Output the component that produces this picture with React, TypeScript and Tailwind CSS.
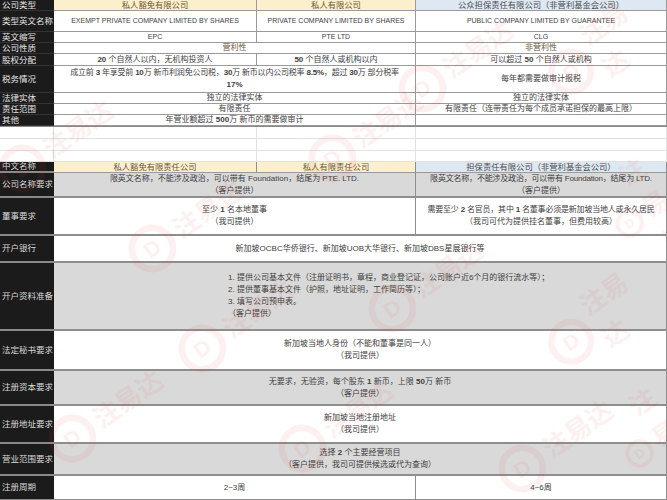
import type { ReactNode } from "react";

const FONT = "font-['Liberation_Sans','Noto_Sans_CJK_SC',sans-serif]";

function Label({ children, lower = false }: { children: ReactNode; lower?: boolean }) {
  return (
    <div
      className={
        lower
          ? "flex items-center bg-[#1b1b1b] border-b-2 border-[#8a8a8a] pl-[2px] text-[8.5px] text-[#d8d8d8] whitespace-nowrap overflow-hidden"
          : "flex items-center bg-[#1b1b1b] border-b border-[#333] pl-[2px] text-[8.5px] leading-[10px] text-[#e4e4e4] whitespace-nowrap overflow-hidden"
      }
    >
      {children}
    </div>
  );
}

function Cell({ children, className = "" }: { children?: ReactNode; className?: string }) {
  return (
    <div
      className={
        "flex flex-col items-center justify-center text-center leading-[10px] whitespace-nowrap border-r border-b border-[#9a9a9a] overflow-hidden " +
        className
      }
    >
      {children}
    </div>
  );
}

function LowCell({ children, className = "" }: { children?: ReactNode; className?: string }) {
  return (
    <div
      className={
        "flex flex-col items-center justify-center text-center leading-[12px] whitespace-nowrap border-r border-[#8e8e8e] overflow-hidden " +
        className
      }
    >
      {children}
    </div>
  );
}

const B = ({ children }: { children: ReactNode }) => <span className="font-bold">{children}</span>;

const marks = [
  { x: -10, y: 120 },
  { x: 120, y: 200 },
  { x: 300, y: 110 },
  { x: 390, y: 40 },
  { x: 540, y: 10 },
  { x: 610, y: 150 },
  { x: 170, y: 300 },
  { x: 360, y: 260 },
  { x: 540, y: 280 },
  { x: 40, y: 390 },
  { x: 270, y: 400 },
  { x: 490, y: 420 },
  { x: 620, y: 380 },
];

function Watermark({ x, y }: { x: number; y: number }) {
  return (
    <div
      className="absolute flex items-center gap-1 -rotate-[35deg] text-[#e04a3a] opacity-[0.07]"
      style={{ left: x, top: y }}
    >
      <svg width="50" height="50" viewBox="0 0 46 46">
        <circle cx="23" cy="23" r="19" fill="none" stroke="currentColor" strokeWidth="6" />
        <text x="23" y="30" textAnchor="middle" fontSize="20" fontWeight="700" fill="currentColor" fontFamily="Liberation Sans, sans-serif">
          D
        </text>
      </svg>
      <span className="text-[26px] font-bold">注易达</span>
    </div>
  );
}

export default function App() {
  return (
    <div className={"relative w-[667px] h-[500px] overflow-hidden bg-white text-[8px] text-[#3e3e3e] " + FONT}>
      {/* upper table */}
      <div className="grid grid-cols-[54px_203px_159px_251px] grid-rows-[11px_21px_11px_11px_12px_27px_11px_11px_11px]">
        <Label>公司类型</Label>
        <Cell className="bg-[#fcefcb] text-[#6a5838] text-[8.3px]">私人豁免有限公司</Cell>
        <Cell className="bg-[#fcefcb] text-[#6a5838] text-[8.3px]">私人有限公司</Cell>
        <Cell className="bg-[#dee8f3] text-[#4d4d4d] text-[8.3px]">公众担保责任有限公司（非营利基金会公司）</Cell>

        <Label>类型英文名称</Label>
        <Cell className="text-[7px]">EXEMPT PRIVATE COMPANY LIMITED BY SHARES</Cell>
        <Cell className="text-[7px]">PRIVATE COMPANY LIMITED BY SHARES</Cell>
        <Cell className="text-[7px]">PUBLIC COMPANY LIMITED BY GUARANTEE</Cell>

        <Label>英文缩写</Label>
        <Cell className="text-[7px]">EPC</Cell>
        <Cell className="text-[7px]">PTE LTD</Cell>
        <Cell className="text-[7px]">CLG</Cell>

        <Label>公司性质</Label>
        <Cell className="col-span-2 text-[#6a5838]">营利性</Cell>
        <Cell className="text-[#6a5838]">非营利性</Cell>

        <Label>股权分配</Label>
        <Cell>
          <span>
            <B>20</B> 个自然人以内，无机构投资人
          </span>
        </Cell>
        <Cell>
          <span>
            <B>50</B> 个自然人或机构以内
          </span>
        </Cell>
        <Cell>
          <span>
            可以超过 <B>50</B> 个自然人或机构
          </span>
        </Cell>

        <Label>税务情况</Label>
        <Cell className="col-span-2 leading-[12px]">
          <span className="tracking-[-0.2px]">
            成立前 <B>3</B> 年享受前 <B>10</B>万 新币利润免公司税，<B>30</B>万 新币以内公司税率 <B>8.5%</B>，超过 <B>30</B>万 部分税率
          </span>
          <B>17%</B>
        </Cell>
        <Cell>每年都需要做审计报税</Cell>

        <Label>法律实体</Label>
        <Cell className="col-span-2">独立的法律实体</Cell>
        <Cell>独立的法律实体</Cell>

        <Label>责任范围</Label>
        <Cell className="col-span-2">有限责任</Cell>
        <Cell>有限责任（连带责任为每个成员承诺担保的最高上限）</Cell>

        <Label>其他</Label>
        <Cell className="col-span-2">
          <span>
            年营业额超过 <B>500</B>万 新币的需要做审计
          </span>
        </Cell>
        <Cell />
      </div>

      {/* blank rows */}
      <div className="grid grid-cols-[54px_203px_159px_251px] grid-rows-[12px_12px_11px] border-t border-[#8a8a8a]">
        {Array.from({ length: 12 }).map((_, i) => (
          <div key={i} className="border-r border-b border-[#e2e2e2]" />
        ))}
      </div>

      {/* lower table */}
      <div className="grid grid-cols-[54px_203px_159px_251px] grid-rows-[11px_25px_38px_27px_68px_40px_35px_38px_32px_25px]">
        <Label lower>中文名称</Label>
        <LowCell className="bg-[#fcefcb] text-[#6a5838] text-[8.3px] border-b border-b-[#9a9a9a]">私人豁免有限责任公司</LowCell>
        <LowCell className="bg-[#fcefcb] text-[#6a5838] text-[8.3px] border-b border-b-[#9a9a9a]">私人有限责任公司</LowCell>
        <LowCell className="bg-[#dee8f3] text-[#4d4d4d] text-[8.3px] border-b border-b-[#9a9a9a]">担保责任有限公司（非营利基金会公司）</LowCell>

        <Label lower>公司名称要求</Label>
        <LowCell className="col-span-2 bg-[#d9d9d9] border-b-2">
          <span>限英文名称，不能涉及政治，可以带有 Foundation，结尾为 PTE. LTD.</span>
          <span>（客户提供）</span>
        </LowCell>
        <LowCell className="bg-[#d9d9d9] border-b-2">
          <span className="tracking-[-0.2px]">限英文名称，不能涉及政治，可以带有 Foundation，结尾为 LTD.</span>
          <span>（客户提供）</span>
        </LowCell>

        <Label lower>董事要求</Label>
        <LowCell className="col-span-2 border-b-2">
          <span>
            至少 <B>1</B> 名本地董事
          </span>
          <span>（我司提供）</span>
        </LowCell>
        <LowCell className="border-b-2">
          <span className="tracking-[-0.2px]">
            需要至少 <B>2</B> 名官员，其中 <B>1</B> 名董事必须是新加坡当地人或永久居民
          </span>
          <span>（我司可代为提供挂名董事，但费用较高）</span>
        </LowCell>

        <Label lower>开户银行</Label>
        <LowCell className="col-span-3 border-b-2">新加坡OCBC华侨银行、新加坡UOB大华银行、新加坡DBS星展银行等</LowCell>

        <Label lower>开户资料准备</Label>
        <LowCell className="col-span-3 bg-[#d9d9d9] border-b-2 !items-start pl-[174px] text-left leading-[12px]">
          <span>1. 提供公司基本文件（注册证明书，章程，商业登记证，公司账户近6个月的银行流水等）；</span>
          <span>2. 提供董事基本文件（护照，地址证明，工作简历等）；</span>
          <span>3. 填写公司预申表。</span>
          <span>（客户提供）</span>
        </LowCell>

        <Label lower>法定秘书要求</Label>
        <LowCell className="col-span-3 border-b-2">
          <span>新加坡当地人身份（不能和董事是同一人）</span>
          <span>（我司提供）</span>
        </LowCell>

        <Label lower>注册资本要求</Label>
        <LowCell className="col-span-3 bg-[#d9d9d9] border-b-2">
          <span>
            无要求，无验资，每个股东 <B>1</B> 新币，上限 <B>50</B>万 新币
          </span>
          <span>（客户提供）</span>
        </LowCell>

        <Label lower>注册地址要求</Label>
        <LowCell className="col-span-3 border-b-2">
          <span>新加坡当地注册地址</span>
          <span>（我司提供）</span>
        </LowCell>

        <Label lower>营业范围要求</Label>
        <LowCell className="col-span-3 bg-[#d9d9d9] border-b-2">
          <span>
            选择 <B>2</B> 个主要经营项目
          </span>
          <span>（客户提供，我司可提供候选或代为查询）</span>
        </LowCell>

        <Label lower>注册周期</Label>
        <LowCell className="col-span-2 border-b-2">2~3周</LowCell>
        <LowCell className="border-b-2">4~6周</LowCell>
      </div>

      <div className="pointer-events-none absolute inset-0">
        {marks.map((m, i) => (
          <Watermark key={i} x={m.x} y={m.y} />
        ))}
      </div>
    </div>
  );
}
